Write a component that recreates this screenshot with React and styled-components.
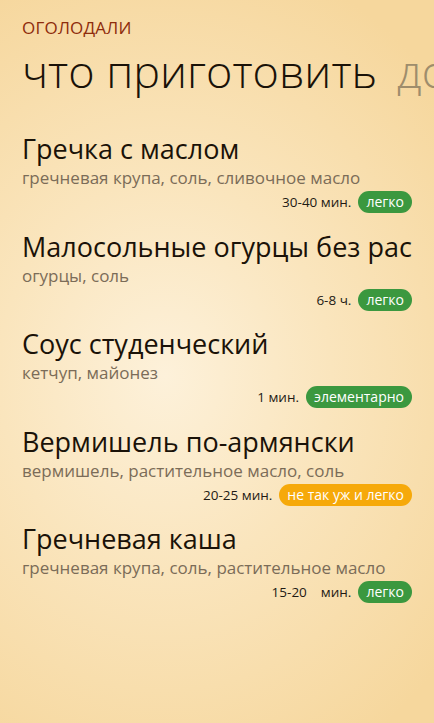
import React from "react";
import styled, { createGlobalStyle } from "styled-components";

const GlobalStyle = createGlobalStyle`
  html, body {
    margin: 0;
    padding: 0;
  }
  body {
    font-family: "Open Sans", "Noto Sans", sans-serif;
  }
`;

const Page = styled.div`
  width: 434px;
  height: 723px;
  overflow: hidden;
  box-sizing: border-box;
  padding: 17px 22px 0 22px;
  background: radial-gradient(
    ellipse 85% 60% at 38% 52%,
    #fdf1da 0%,
    #fae5bd 45%,
    #f6d79d 100%
  );
`;

const AppName = styled.div`
  font-size: 17px;
  line-height: 22px;
  color: #8e2c0c;
  letter-spacing: 0.2px;
`;

const Pivot = styled.div`
  display: flex;
  gap: 20px;
  white-space: nowrap;
  margin-top: 4px;
  margin-right: -22px;
  overflow-x: clip;
`;

const PivotItem = styled.span`
  font-size: 45px;
  font-weight: 300;
  line-height: 56px;
  color: ${(p) => (p.$active ? "#1a1208" : "#9e8d6c")};
`;

const List = styled.div`
  display: flex;
  flex-direction: column;
  margin-top: 33px;
`;

const Recipe = styled.div`
  display: flex;
  flex-direction: column;
  height: 97.5px;
`;

const Title = styled.div`
  font-size: 27px;
  line-height: 34px;
  color: #1a1208;
  white-space: nowrap;
  overflow-x: clip;
`;

const Ingredients = styled.div`
  font-size: 17px;
  line-height: 24px;
  color: #7b6c58;
`;

const Meta = styled.div`
  display: flex;
  justify-content: flex-end;
  align-items: center;
  gap: 7px;
  margin-top: 1px;
`;

const Time = styled.span`
  font-size: 13.5px;
  color: #1e1a14;
  white-space: pre;
`;

const Badge = styled.span`
  font-size: 14px;
  line-height: 22px;
  padding: 0 8px;
  border-radius: 11px;
  color: #ffffff;
  background: ${(p) => (p.$level === "hard" ? "#f6a90a" : "#3b983f")};
`;

const recipes = [
  {
    title: "Гречка с маслом",
    ingredients: "гречневая крупа, соль, сливочное масло",
    time: "30-40 мин.",
    level: "easy",
    badge: "легко",
  },
  {
    title: "Малосольные огурцы без рассола",
    ingredients: "огурцы, соль",
    time: "6-8 ч.",
    level: "easy",
    badge: "легко",
  },
  {
    title: "Соус студенческий",
    ingredients: "кетчуп, майонез",
    time: "1 мин.",
    level: "easy",
    badge: "элементарно",
  },
  {
    title: "Вермишель по-армянски",
    ingredients: "вермишель, растительное масло, соль",
    time: "20-25 мин.",
    level: "hard",
    badge: "не так уж и легко",
  },
  {
    title: "Гречневая каша",
    ingredients: "гречневая крупа, соль, растительное масло",
    time: "15-20    мин.",
    level: "easy",
    badge: "легко",
  },
];

export default function App() {
  return (
    <>
      <GlobalStyle />
      <Page>
        <AppName>ОГОЛОДАЛИ</AppName>
        <Pivot>
          <PivotItem $active>что приготовить</PivotItem>
          <PivotItem>добавить</PivotItem>
        </Pivot>
        <List>
          {recipes.map((r) => (
            <Recipe key={r.title}>
              <Title>{r.title}</Title>
              <Ingredients>{r.ingredients}</Ingredients>
              <Meta>
                <Time>{r.time}</Time>
                <Badge $level={r.level}>{r.badge}</Badge>
              </Meta>
            </Recipe>
          ))}
        </List>
      </Page>
    </>
  );
}
